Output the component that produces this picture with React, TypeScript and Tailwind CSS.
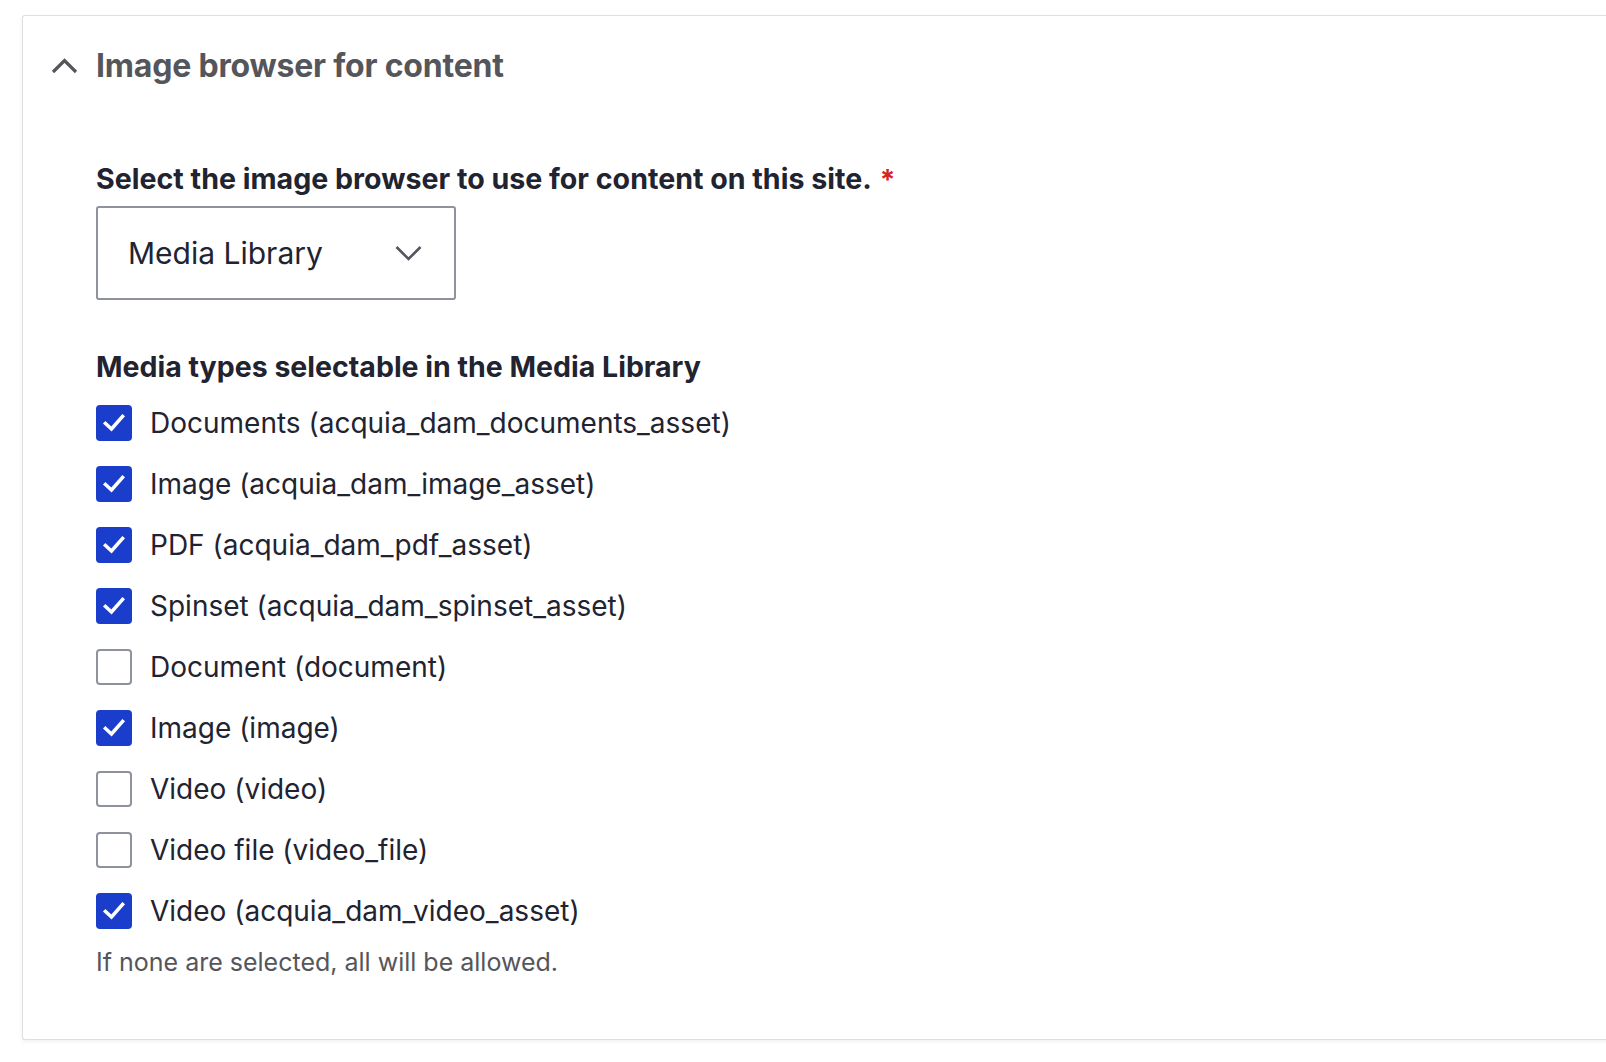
import { useState } from 'react'

const mediaTypes = [
  { id: 'acquia_dam_documents_asset', label: 'Documents (acquia_dam_documents_asset)', checked: true },
  { id: 'acquia_dam_image_asset', label: 'Image (acquia_dam_image_asset)', checked: true },
  { id: 'acquia_dam_pdf_asset', label: 'PDF (acquia_dam_pdf_asset)', checked: true },
  { id: 'acquia_dam_spinset_asset', label: 'Spinset (acquia_dam_spinset_asset)', checked: true },
  { id: 'document', label: 'Document (document)', checked: false },
  { id: 'image', label: 'Image (image)', checked: true },
  { id: 'video', label: 'Video (video)', checked: false },
  { id: 'video_file', label: 'Video file (video_file)', checked: false },
  { id: 'acquia_dam_video_asset', label: 'Video (acquia_dam_video_asset)', checked: true },
]

function Checkbox({ checked }: { checked: boolean }) {
  if (checked) {
    return (
      <span className="flex h-[36px] w-[36px] shrink-0 items-center justify-center rounded-[4px] bg-[#1a3dcb]">
        <svg width="24" height="24" viewBox="0 0 24 24" fill="none">
          <path d="M3.5 12.5 L9.5 18 L20.5 5.5" stroke="white" strokeWidth="3.6" strokeLinecap="square" strokeLinejoin="miter" />
        </svg>
      </span>
    )
  }
  return <span className="block h-[36px] w-[36px] shrink-0 rounded-[4px] border-2 border-[#8e929c] bg-white" />
}

export default function App() {
  const [open, setOpen] = useState(true)
  const [items, setItems] = useState(mediaTypes)

  const toggle = (id: string) => {
    setItems(items.map((m) => (m.id === id ? { ...m, checked: !m.checked } : m)))
  }

  return (
    <div className="min-h-screen overflow-hidden bg-white pl-[22px] pt-[15px]" style={{ fontFamily: 'Inter, "Noto Sans", sans-serif' }}>
      <div className="h-[1025px] w-[1620px] rounded-l-[3px] border border-r-0 border-[#dedfe4] bg-white shadow-[0_2px_4px_rgba(0,0,0,0.06)]">
        {/* summary */}
        <button
          onClick={() => setOpen(!open)}
          className="flex h-[99px] w-full items-center pl-[28px] text-left"
        >
          <svg width="27" height="16" viewBox="0 0 27 16" fill="none" className="mr-[18px]">
            <path d="M2 14 L13.5 2.5 L25 14" stroke="#55565b" strokeWidth="3.2" />
          </svg>
          <span className="text-[32px] font-bold leading-none tracking-[-0.2px] text-[#55565b]">Image browser for content</span>
        </button>

        {open && (
          <div className="pl-[73px] text-[#222330]">
            <div className="mt-[46px] flex h-[36px] items-center text-[28.6px] font-bold leading-none">
              Select the image browser to use for content on this site.
              <span className="ml-[8px] mt-[2px] text-[28px] text-[#d72222]">*</span>
            </div>

            <div className="mt-[9px] flex h-[94px] w-[360px] items-center justify-between rounded-[3px] border-2 border-[#8e929c] pl-[30px] pr-[32px]">
              <span className="text-[30px] leading-none">Media Library</span>
              <svg width="27" height="16" viewBox="0 0 27 16" fill="none">
                <path d="M1.5 2 L13.5 14 L25.5 2" stroke="#545560" strokeWidth="2.6" />
              </svg>
            </div>

            <div className="mt-[49px] flex h-[36px] items-center text-[28.5px] font-bold leading-none">
              Media types selectable in the Media Library
            </div>

            <div className="mt-[7px]">
              {items.map((m) => (
                <label key={m.id} onClick={() => toggle(m.id)} className="flex h-[61px] cursor-pointer items-center">
                  <Checkbox checked={m.checked} />
                  <span className="ml-[18px] text-[28px] leading-none">{m.label}</span>
                </label>
              ))}
            </div>

            <div className="mt-[6px] flex h-[30px] items-center text-[25px] leading-none text-[#55565b]">
              If none are selected, all will be allowed.
            </div>
          </div>
        )}
      </div>
    </div>
  )
}
